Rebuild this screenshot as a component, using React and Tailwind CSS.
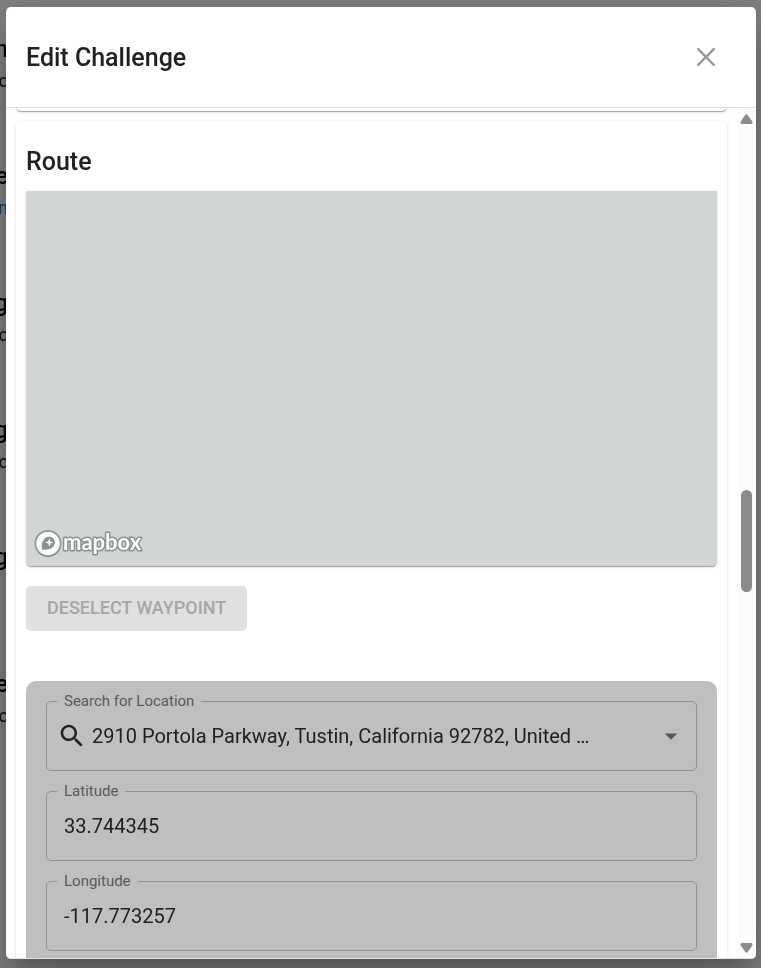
import React, { useState } from 'react';

const fieldBox =
  'relative flex h-[70px] items-center rounded-[5px] border border-[#929292] focus-within:border-[#333333]';

// Rows of the page that stays visible beside the dialog
const pageRows = [
  { title: 'n', text: 'c', extra: '' },
  { title: 'e', text: 'n', extra: 'text-[#1976d2]' },
  { title: 'g', text: 'c', extra: '' },
  { title: 'g', text: 'lc', extra: '' },
  { title: 'g', text: '', extra: '' },
  { title: 'e', text: 'c', extra: '' },
];

const PageBehind = () => (
  <div className="h-full overflow-hidden bg-white pt-[34px]" aria-hidden="true">
    {pageRows.map((row, index) => (
      <div key={index} className="flex h-[127px] w-2 flex-col items-end">
        <p className="h-[30px] text-2xl leading-[30px] font-medium text-black">{row.title}</p>
        <p className={`text-lg leading-[34px] ${row.extra}`}>{row.text}</p>
      </div>
    ))}
  </div>
);

const MapboxLogo = () => (
  <svg width="110" height="30" viewBox="0 0 110 30" role="img" aria-label="Mapbox">
    <circle cx="14" cy="15.5" r="12.6" fill="#ffffff" stroke="#8d908f" strokeWidth="1.6" />
    <path
      d="M7.9 21.4C7.2 16.4 8.2 13.1 10.6 10.7C13.4 8 17.3 8.3 19.4 10.5C21.5 12.7 21.6 16.3 18.9 19C16.4 21.5 12.8 22 7.9 21.4Z"
      fill="#8d908f"
    />
    <path d="M15.3 10.3L16.4 13.3L19.4 14.4L16.4 15.5L15.3 18.5L14.2 15.5L11.2 14.4L14.2 13.3Z" fill="#ffffff" />
    <text
      x="29"
      y="22"
      className="font-['Lato',sans-serif] text-[22px] font-bold"
      fill="#ffffff"
      stroke="#8d908f"
      strokeWidth="3"
      strokeLinejoin="round"
      paintOrder="stroke"
    >
      mapbox
    </text>
  </svg>
);

const FieldLabel = ({ htmlFor, children }) => (
  <label
    htmlFor={htmlFor}
    className="absolute -top-[11px] left-2.5 bg-[#bfbfbf] px-[7px] text-[15px] leading-5 text-[#5b5b5b]"
  >
    {children}
  </label>
);

const TextField = ({ id, label, value, onChange }) => (
  <div className={fieldBox}>
    <FieldLabel htmlFor={id}>{label}</FieldLabel>
    <input
      id={id}
      type="text"
      value={value}
      onChange={(e) => onChange(e.target.value)}
      className="h-full w-full bg-transparent px-[17px] text-xl outline-none"
    />
  </div>
);

const LocationField = ({ value, onChange }) => (
  <div className={`${fieldBox} px-2.5`}>
    <FieldLabel htmlFor="location">Search for Location</FieldLabel>
    <svg className="h-[30px] w-[30px] shrink-0" viewBox="0 0 24 24" fill="currentColor" aria-hidden="true">
      <path d="M15.5 14h-.79l-.28-.27C15.41 12.59 16 11.11 16 9.5 16 5.91 13.09 3 9.5 3S3 5.91 3 9.5 5.91 16 9.5 16c1.61 0 3.09-.59 4.23-1.57l.27.28v.79l5 4.99L20.49 19l-4.99-5zm-6 0C7.01 14 5 11.99 5 9.5S7.01 5 9.5 5 14 7.01 14 9.5 11.99 14 9.5 14z" />
    </svg>
    <input
      id="location"
      type="text"
      role="combobox"
      aria-expanded="false"
      aria-controls="location-options"
      value={value}
      onChange={(e) => onChange(e.target.value)}
      className="h-full min-w-0 flex-1 bg-transparent pl-[5px] text-xl text-ellipsis outline-none"
    />
    <button type="button" aria-label="Open" className="shrink-0 text-[#585858]">
      <svg className="h-[30px] w-[30px]" viewBox="0 0 24 24" fill="currentColor">
        <path d="M7 10l5 5 5-5z" />
      </svg>
    </button>
  </div>
);

const ScrollRail = () => (
  <div className="flex w-[19px] shrink-0 flex-col items-center bg-[#fbfbfb] pt-1.5 pb-[5px]" aria-hidden="true">
    <svg width="13" height="10" viewBox="0 0 13 10" fill="#8b8b8b">
      <path d="M5.3.9Q6.5-.4 7.7.9L12.3 7.6Q13 9.7 11.2 10H1.8Q0 9.7.7 7.6Z" />
    </svg>
    <div className="grow-[366]" />
    <div className="h-[102px] w-[11px] rounded-full bg-[#8b8b8b]" />
    <div className="grow-[351]" />
    <svg width="13" height="10" viewBox="0 0 13 10" fill="#8b8b8b">
      <path d="M5.3 9.1Q6.5 10.4 7.7 9.1L12.3 2.4Q13 .3 11.2 0H1.8Q0 .3.7 2.4Z" />
    </svg>
  </div>
);

const App = () => {
  const [location, setLocation] = useState('2910 Portola Parkway, Tustin, California 92782, United …');
  const [latitude, setLatitude] = useState('33.744345');
  const [longitude, setLongitude] = useState('-117.773257');

  const paper =
    'rounded-[5px] bg-white shadow-[0_2px_1px_-1px_rgba(0,0,0,0.2),0_1px_1px_0_rgba(0,0,0,0.14),0_1px_4px_0_rgba(0,0,0,0.12)]';

  return (
    <div className="h-screen overflow-hidden font-['Roboto',sans-serif] text-[#212121]">
      <PageBehind />

      <div className="fixed inset-0 bg-black/50 pt-[7px] pr-[5px] pb-[9px] pl-1.5">
        <div
          role="dialog"
          aria-labelledby="dialog-title"
          className="flex h-full flex-col overflow-hidden rounded-[5px] bg-white shadow-[0_14px_19px_-9px_rgba(0,0,0,0.2),0_30px_48px_4px_rgba(0,0,0,0.14),0_11px_58px_10px_rgba(0,0,0,0.12)]"
        >
          {/* Header */}
          <div className="flex h-[101px] shrink-0 items-center justify-between border-b border-[#e0e0e0] pr-[35px] pl-5">
            <h2 id="dialog-title" className="pt-0.5 text-[25px] leading-10 font-medium">
              Edit Challenge
            </h2>
            <button type="button" aria-label="Close" className="text-[#999999]">
              <svg width="30" height="30" viewBox="0 0 30 30" stroke="currentColor" strokeWidth="2.4" strokeLinecap="round">
                <path d="M7.2 7.2L22.8 22.8M22.8 7.2L7.2 22.8" />
              </svg>
            </button>
          </div>

          {/* Body */}
          <div className="flex min-h-0 flex-1 border-b border-[#e0e0e0]">
            <div className="min-w-0 flex-1 overflow-hidden px-2.5">
              <div className={`-mt-2 mb-2.5 h-[11px] ${paper}`} />

              <section className={`p-2.5 ${paper}`}>
                <h3 className="pt-[11px] pb-[9px] text-[25px] leading-10 font-medium">Route</h3>

                <div className="flex h-[375px] items-end rounded-b-[5px] bg-[#d1d5d6] pb-2 pl-2 shadow-[0_2px_1px_-1px_rgba(0,0,0,0.2),0_1px_1px_0_rgba(0,0,0,0.14),0_1px_4px_0_rgba(0,0,0,0.12)]">
                  <MapboxLogo />
                </div>

                <button
                  type="button"
                  disabled
                  className="mt-5 h-[45px] rounded-[5px] bg-[#e0e0e0] px-[21px] pb-0.5 text-lg font-medium text-[#a6a6a6] uppercase"
                >
                  Deselect Waypoint
                </button>

                <div className="mt-[50px] flex flex-col gap-5 rounded-[10px] bg-[#bfbfbf] p-5">
                  <LocationField value={location} onChange={setLocation} />
                  <TextField id="latitude" label="Latitude" value={latitude} onChange={setLatitude} />
                  <TextField id="longitude" label="Longitude" value={longitude} onChange={setLongitude} />
                </div>
              </section>
            </div>
            <ScrollRail />
          </div>
        </div>
      </div>
    </div>
  );
};

export default App;
